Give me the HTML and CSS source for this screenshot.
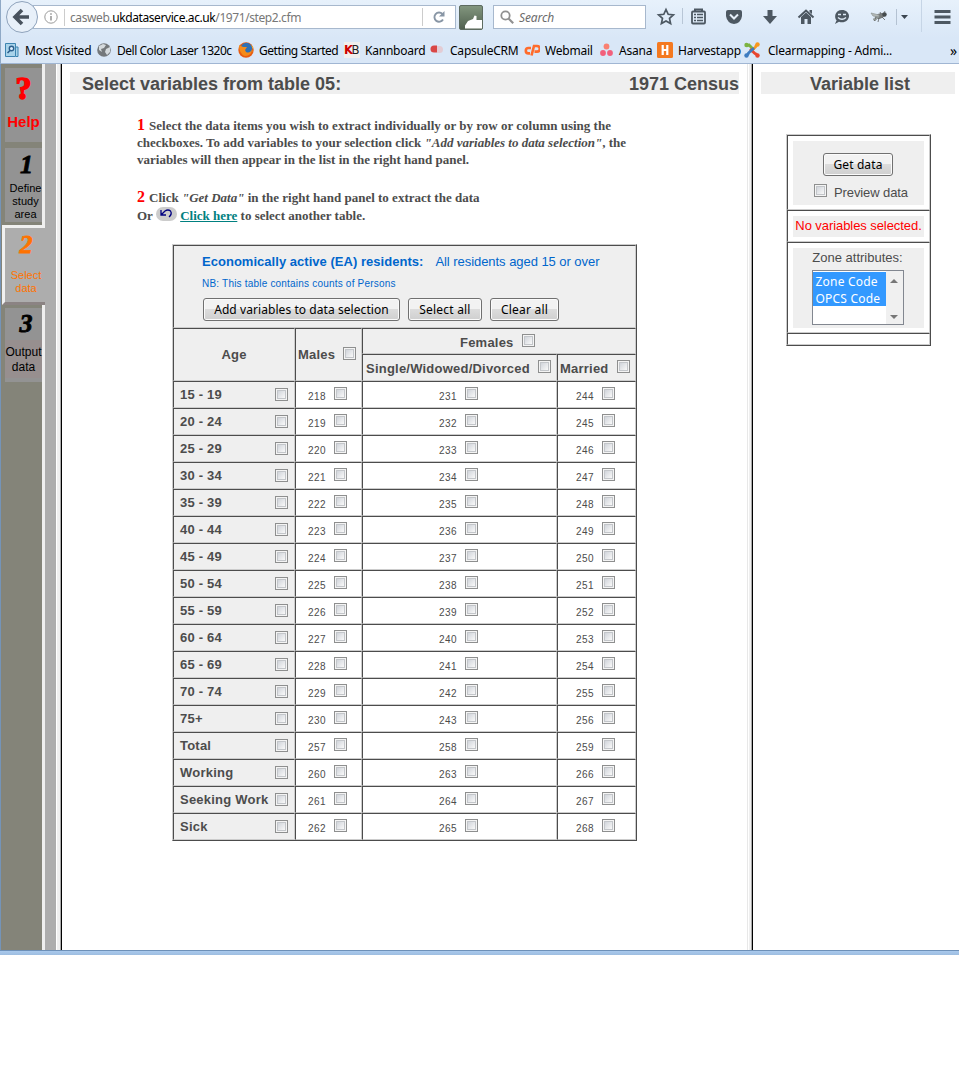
FILE: index.html
```html
<!DOCTYPE html>
<html lang="en">
<head>
<meta charset="utf-8">
<title>Casweb - Select variables</title>
<link rel="stylesheet" href="styles.css">
</head>
<body>
<div class="window">
  <header class="chrome">
    <div class="navbar">
      <svg class="back" width="34" height="34" viewBox="0 0 34 34"><circle cx="17" cy="17" r="15.5" fill="#e8f0f9" stroke="#8fa3bc"/><path d="M17 10l-7 7 7 7M11 17h13" fill="none" stroke="#48525d" stroke-width="3.6"/></svg>
      <div class="url">
        <svg width="14" height="14" viewBox="0 0 14 14"><circle cx="7" cy="7" r="6.2" fill="none" stroke="#9a9a9a"/><path d="M7 6v4.5M7 3.2v1.6" stroke="#8a8a8a" stroke-width="1.4"/></svg>
        <span class="address">casweb.<b>ukdataservice.ac.uk</b>/1971/step2.cfm</span>
        <span class="reload"><svg width="14" height="14" viewBox="0 0 14 14"><path d="M11 9.5A4.6 4.6 0 1 1 10.4 4" fill="none" stroke="#8896a5" stroke-width="1.9"/><path d="M12.5 1v5.5H7z" fill="#8896a5"/></svg></span>
      </div>
      <svg class="addon" width="24" height="25" viewBox="0 0 24 25"><defs><linearGradient id="g" x2="0" y2="1"><stop offset="0" stop-color="#83977f"/><stop offset="1" stop-color="#50604f"/></linearGradient></defs><rect x=".5" y=".5" width="23" height="24" rx="1.5" fill="url(#g)" stroke="#5d6b60"/><path d="M6 23.500v-3l3-4.500 5-2 1.500-3.500 2 .5v4H23v8.500z" fill="#fff"/></svg>
      <div class="search"><svg width="14" height="14" viewBox="0 0 14 14"><circle cx="5.500" cy="5.500" r="4.200" fill="none" stroke="#909090" stroke-width="1.800"/><path d="M8.500 8.500l4.700 4.700" stroke="#909090" stroke-width="2.200"/></svg><i>Search</i></div>
      <div class="tools">
        <svg width="32" height="32" viewBox="0 0 32 32"><path d="M16 9.500l2.200 4.800 5.200.6-3.900 3.500 1.100 5.200-4.600-2.600-4.600 2.600 1.100-5.200-3.900-3.500 5.200-.6z" fill="none" stroke="#4d5862" stroke-width="1.700"/></svg>
        <svg width="32" height="32" viewBox="0 0 32 32"><path d="M.5 8v16" stroke="#b8c6d6"/><rect x="10" y="11.500" width="13" height="12" rx="1" fill="none" stroke="#4d5862" stroke-width="1.800"/><path d="M13 11V9.500h7V11" fill="none" stroke="#4d5862" stroke-width="2"/><path d="M12 14.500h2m1 0h6m-9 3h2m1 0h6m-9 3h2m1 0h6" stroke="#4d5862" stroke-width="1.400"/></svg>
        <svg width="40" height="32" viewBox="0 0 40 32"><path d="M12 12q0-2 2-2h12q2 0 2 2v4q-1 7-8 8-7-1-8-8z" fill="#4d5862"/><path d="M16 14.500l4 4 4-4" fill="none" stroke="#e6effa" stroke-width="2"/></svg>
        <svg width="32" height="32" viewBox="0 0 32 32"><path d="M13.500 10h5v6H23l-7 8-7-8h4.500z" fill="#4d5862"/></svg>
        <svg width="40" height="32" viewBox="0 0 40 32"><path d="M12.500 17.500L20 10.500l7.500 7" fill="none" stroke="#4d5862" stroke-width="2"/><path d="M15 17l5-4.500 5 4.500v7h-3.500v-5h-3v5H15zM23.500 10H26v4l-2.500-2z" fill="#4d5862"/></svg>
        <svg width="32" height="32" viewBox="0 0 32 32"><path d="M16 10c4 0 7 2.700 7 6s-3 6.300-7 6.300c-1 0-2 0-3-.5L9 24l1.600-3.700C8 18 8.500 10 16 10z" fill="#4d5862"/><path d="M12 14.500h3m2 0h3" stroke="#dfeaf6" stroke-width="1.700"/><path d="M12 17.500q4 3.500 8 0" fill="none" stroke="#dfeaf6" stroke-width="1.500"/></svg>
        <svg width="38" height="32" viewBox="0 0 38 32"><ellipse cx="22" cy="16" rx="5.500" ry="2.500" fill="#777b7b" transform="rotate(-18 22 16)"/><circle cx="26.500" cy="14.500" r="2.200" fill="#454b4d"/><path d="M21 15l-8-2 2 3 6 1zM15 19l6-2-4 4z" fill="#b5bab8" stroke="#8d9593" stroke-width=".7"/><path d="M18 18l-2 3m5-3l-1 4m4-5l3 3M23 14l-1-2m4 1l1-2" stroke="#5a5e5f" stroke-width=".8"/></svg>
        <svg width="20" height="32" viewBox="0 0 20 32"><path d="M.5 9v16" stroke="#b4c2d2"/><path d="M5 15h7l-3.500 4z" fill="#3c4650"/></svg>
        <svg width="44" height="32" viewBox="0 0 44 32"><path d="M5.500 0v32" stroke="#c6d5e6"/><path d="M18.500 11.500h16M18.500 17h16M18.500 22.500h16" stroke="#4d5862" stroke-width="2.800"/></svg>
      </div>
    </div>
    <nav class="bookmarks">
      <a><svg width="14" height="16" viewBox="0 0 14 16"><path d="M.5 1.500h10v13H.5zM10.500 5H13v9.500h-2" fill="#a9d3ea" stroke="#3d84b0"/><circle cx="6.500" cy="6.500" r="2.200" fill="#def" stroke="#2c5f8c" stroke-width="1.400"/><path d="M5 8.500L2.500 11" stroke="#2c5f8c" stroke-width="1.600"/></svg><span>Most Visited</span></a>
      <a><svg width="14" height="16" viewBox="0 0 14 16"><circle cx="7" cy="8" r="6.800" fill="#74787b"/><path d="M2 4l4-2 3 1-2 3-3 1 1 3-3-2zM9 7l4-2v5l-3 3-2-3z" fill="#d5dadd"/></svg><span class="tight">Dell Color Laser 1320c</span></a>
      <a><svg width="16" height="16" viewBox="0 0 16 16"><circle cx="8" cy="8" r="7.700" fill="#e75b12"/><circle cx="8.500" cy="6.500" r="5.800" fill="#2f70b5"/><path d="M1 3l4 2 4 0-2 3 1 2q4 2 6-3Q14 14 7 14 1 12 1 3" fill="#f58b19"/><path d="M12 2q4 4 2 9l1-6" fill="#ffc928"/></svg><span class="tight">Getting Started</span></a>
      <a><span class="kb"><b>K</b>B</span><span>Kannboard</span></a>
      <a><svg width="15" height="16" viewBox="0 0 15 16"><path d="M7 3.500H4a3.500 3.500 0 0 0 0 7h3z" fill="#d94746"/><path d="M7 4h2.500a3.500 3.500 0 0 1 0 7H7z" fill="#e3ccd4"/></svg><span>CapsuleCRM</span></a>
      <a><svg width="16" height="16" viewBox="0 0 16 16"><path d="M7 6H4.500a2.700 2.700 0 0 0 0 5.400H6M7.500 13.500L10 4h3a2.700 2.700 0 0 1 0 5.600h-2.500" fill="none" stroke="#ff6c2c" stroke-width="2.600"/></svg><span>Webmail</span></a>
      <a><svg width="14" height="16" viewBox="0 0 14 16"><circle cx="6.500" cy="4.500" r="2.900" fill="#f98072"/><circle cx="3" cy="11" r="2.900" fill="#f2607c"/><circle cx="10" cy="11" r="2.900" fill="#f2607c"/></svg><span>Asana</span></a>
      <a><svg width="16" height="16" viewBox="0 0 16 16"><rect width="16" height="16" rx="1.500" fill="#f47920"/><path d="M5.700 3v10M10.300 3v10M6 8h4" stroke="#fff" stroke-width="2.200"/></svg><span>Harvestapp</span></a>
      <a><svg width="16" height="16" viewBox="0 0 16 16"><g fill="none" stroke-width="2.800"><path d="M3 4l2-1 5 5" stroke="#7cb342"/><path d="M12.500 3l-1 2-5 4.500" stroke="#f8971d"/><path d="M13 12.500l-2-1L6 7" stroke="#e8452f"/><path d="M3.500 13l1-2L10 6" stroke="#3e7cc0"/></g><circle cx="2.500" cy="3" r="2.200" fill="#7cb342"/><circle cx="13.500" cy="2.500" r="2.200" fill="#f8971d"/><circle cx="13.500" cy="13.500" r="2.200" fill="#e8452f"/><circle cx="2.500" cy="13.500" r="2.200" fill="#3e7cc0"/></svg><span>Clearmapping - Admi...</span></a>
      <span class="more">»</span>
    </nav>
  </header>
  <div class="frames">
    <aside class="sidebar">
      <div class="tab help"><em>?</em><strong>Help</strong></div>
      <div class="tab one"><em>1</em><span>Define<br>study<br>area</span></div>
      <div class="current"><em>2</em><span>Select<br>data</span></div>
      <div class="tab three"><em>3</em><span>Output<br>data</span></div>
    </aside>
    <div class="divider"></div>
    <main class="main">
      <h1 class="bar"><span>Select variables from table 05:</span><span>1971 Census</span></h1>
      <div class="steps">
        <p><b class="num">1</b> Select the data items you wish to extract individually or by row or column using the<br>checkboxes. To add variables to your selection click <i>"Add variables to data selection"</i>, the<br>variables will then appear in the list in the right hand panel.</p>
        <p class="second"><b class="num">2</b> Click <i>"Get Data"</i> in the right hand panel to extract the data<br>Or <svg class="undo" width="21" height="14" viewBox="0 0 21 14"><rect width="21" height="14" rx="7" fill="#ccc"/><path d="M5 3v5h5M5.500 7.500L9 4q3-2 5.500 0 2 3-1.500 6" fill="none" stroke="#000080" stroke-width="1.300"/></svg> <a>Click here</a> to select another table.</p>
      </div>
      <div class="grid" id="grid">
        <div class="c h intro">
          <p class="topic"><b>Economically active (EA) residents:</b><span>All residents aged 15 or over</span></p>
          <p class="nb">NB: This table contains counts of Persons</p>
          <div class="buttons"><button class="add">Add variables to data selection</button><button class="all">Select all</button><button class="clear">Clear all</button></div>
        </div>
        <div class="c h age">Age</div>
        <div class="c h males"><span>Males</span><i class="cb"></i></div>
        <div class="c h females"><span>Females</span><i class="cb"></i></div>
        <div class="c h sub swd"><span>Single/Widowed/Divorced</span><i class="cb"></i></div>
        <div class="c h sub married"><span>Married</span><i class="cb"></i></div>
      </div>
    </main>
    <div class="divider second"></div>
    <section class="panel">
      <h2 class="bar">Variable list</h2>
      <div class="box">
        <div class="cell get"><div><button>Get data</button><label><i class="cb"></i>Preview data</label></div></div>
        <div class="cell none"><div>No variables selected.</div></div>
        <div class="cell zone"><div><span>Zone attributes:</span>
          <div class="list"><div class="opts"><span>Zone Code</span><span>OPCS Code</span></div><div class="scroll"><svg width="8" height="5"><path d="M0 5l4-4 4 4z" fill="#777"/></svg><svg width="8" height="5"><path d="M0 0l4 4 4-4z" fill="#777"/></svg></div></div></div></div>
        <div class="cell"></div>
      </div>
    </section>
  </div>
  <footer class="edge"></footer>
</div>
<script src="rows.js"></script>
</body>
</html>
```
FILE: styles.css
```css
* { box-sizing: border-box; }
body { margin: 0; background: #fff; font-family: "Liberation Sans", Arial, sans-serif; color: #4c4c4c; }
p, h1, h2 { margin: 0; }
svg { display: block; flex: none; }
.window { width: 959px; height: 955px; overflow: hidden; }

/* Browser chrome */
.chrome { height: 64px; background: linear-gradient(#e7f1fb, #d9e7f7 60%); border-bottom: 1px solid #a0b6d3; border-left: 1px solid #8fa9c6; font-family: "Noto Sans", "Open Sans", sans-serif; font-size: 12px; color: #000; }
.navbar { display: flex; height: 34px; }
.navbar > * { flex: none; }
.back { margin-left: 4px; position: relative; z-index: 1; }
.url { display: flex; align-items: center; margin: 5px 0 0 -6px; width: 423px; height: 24px; padding-left: 10px; background: #fff; border: 1px solid #a7b8cd; }
.address { margin-left: 6px; padding-left: 5px; border-left: 1px solid #ccc; line-height: 17px; color: #777; letter-spacing: -.41px; white-space: nowrap; }
.address b { font-weight: 400; color: #000; }
.reload { margin-left: auto; width: 33px; height: 18px; padding: 2px 0 0 9px; border-left: 1px solid #ccc; }
.addon { margin: 5px 0 0 3px; }
.search { display: flex; align-items: center; gap: 5px; width: 153px; height: 24px; margin: 5px 0 0 10px; padding-left: 6px; background: #fff; border: 1px solid #a7b8cd; color: #6c6c6c; letter-spacing: -.1px; }
.tools { display: flex; margin-left: 4px; }
.bookmarks { display: grid; grid-template-columns: 92px 141px 106px 86px 94px 76px 57px 87px 206px 8px; margin-left: 4px; height: 29px; padding-top: 3px; align-items: center; }
.bookmarks a { display: flex; align-items: center; gap: 6px; white-space: nowrap; letter-spacing: -.22px; }
.bookmarks a:nth-child(n+3) { gap: 5px; }
.bookmarks a:nth-child(9) { gap: 8px; }
.bookmarks .tight { letter-spacing: -.47px; }
.kb { width: 16px; height: 16px; background: #f1efed; font: 13px/16px "DejaVu Sans Condensed", sans-serif; letter-spacing: -1.5px; color: #222; }
.kb b { color: #c00; }
.more { font-size: 14px; }

/* Frameset */
.frames { display: flex; height: 886px; background: #fff; border-left: 1px solid #7494b8; }
.sidebar { width: 55px; padding-top: 4px; background: linear-gradient(90deg, #848479 41px, #efefef 41px 44px, #adadad 44px); }
.tab { width: 37px; height: 74px; margin: 0 0 6px 4px; background: #939393; text-align: center; color: #000; font-size: 11px; line-height: 13px; white-space: nowrap; }
.sidebar em { display: block; font: italic bold 26px/30px "Liberation Serif", serif; -webkit-text-stroke: .8px currentColor; }
.sidebar span { display: block; }
.sidebar .help { color: #f00; }
.sidebar .help em { font: bold 32px/40px "Liberation Serif", serif; -webkit-text-stroke: 1.5px #f00; }
.help strong { display: block; font: bold 15px/16px "Liberation Sans", sans-serif; padding-top: 6px; }
.one em { padding: 2px 0 0 6px; height: 34px; }
.one span { padding-left: 4px; }
.sidebar .one { margin-bottom: 3px; }
.current { width: 43px; height: 80px; margin: 0 0 3px 1px; padding: 2px 0 0 5px; background: #adadad; border: solid #f0f0f0; border-width: 3px 0 3px 3px; border-bottom-color: #8b8383; color: #ff7300; text-align: center; font-size: 11px; line-height: 13px; }
.current em, .current span { width: 32px; }
.current em { height: 39px; }
.three { padding-top: 1px; background: linear-gradient(#939393 32px, #978f8f 32px 70px, #939393 70px); }
.three span { font-size: 12px; line-height: 15px; padding-top: 6px; }
.three em { padding-left: 5px; }
.divider { width: 6px; background: linear-gradient(90deg, #fff 1px, #efefef 1px 4px, #aaa 4px 5px, #000 5px); }
.divider.second { margin: 0; background: linear-gradient(90deg, #e8e8e8 1px, #fff 1px 2px, #efefef 2px 4px, #aaa 4px 5px, #000 5px); }
.main { width: 685px; padding: 8px 8px 0; }
.panel { flex: 1; padding: 8px 4px 0 8px; }
.bar { display: flex; justify-content: space-between; height: 22px; background: #efefef; font-size: 18px; line-height: 24px; font-weight: 700; padding-left: 12px; }
.panel .bar { justify-content: center; padding-left: 4px; }
.steps { padding: 23px 0 0 67px; font: bold 13px/17px "Liberation Serif", serif; white-space: nowrap; }
.num { color: #f00; font-size: 16px; line-height: 16px; margin-right: .8px; }
.second { margin-top: 21px; }
.steps .second { line-height: 18px; }
.undo { display: inline-block; vertical-align: 0; margin-bottom: -1px; }
.steps a { color: #008080; text-decoration: underline; }

/* Variable table */
.grid { display: grid; grid-template-columns: 122px 67px 195px 79px; grid-template-rows: 83px 26px 27px; grid-auto-rows: 27px; width: 465px; margin: 19px 0 0 102px; border: 1px solid #4c4c4c; border-top-color: #ccc; border-left-color: #ccc; font-size: 13px; }
.c { display: flex; align-items: center; border: 1px solid #ccc; border-top-color: #4c4c4c; border-left-color: #4c4c4c; white-space: nowrap; }
.h { background: #efefef; font-weight: 700; letter-spacing: .22px; }
.cb { display: block; flex: none; width: 13px; height: 13px; border: 1px solid #8e8f8f; background: linear-gradient(135deg, #c5cad2, #f8f8f8 80%) padding-box; box-shadow: inset 0 0 0 1px #f4f4f4, inset 0 0 0 2px #c3c6ca; }
.intro { grid-column: 1 / 5; display: block; padding: 7px 0 0 28px; font-weight: 400; color: #0066cc; letter-spacing: 0; }
.topic { font-size: 13px; line-height: 17px; letter-spacing: -.05px; }
.topic b { letter-spacing: .03px; margin-right: 12px; }
.nb { font-size: 10px; line-height: 13px; margin-top: 7px; letter-spacing: .2px; }
.buttons { display: flex; gap: 8px; margin: 8px 0 0 1px; }
button { width: 70px; height: 23px; padding: 0; border: 1px solid #707070; border-radius: 3px; box-shadow: inset 0 0 0 1px #fbfbfb; background: linear-gradient(#f2f2f2 50%, #dcdcdc 50%, #cfcfcf); color: #000; font: 12px/22px "Noto Sans", "Open Sans", sans-serif; white-space: nowrap; }
.add { width: 197px; letter-spacing: .07px; }
.all { width: 74px; letter-spacing: .2px; }
.clear { width: 69px; letter-spacing: .2px; }
.age { grid-row: 2 / 4; justify-content: center; }
.males { grid-row: 2 / 4; gap: 8px; padding-left: 2px; }
.males .cb { margin-top: -3px; }
.females { grid-column: 3 / 5; gap: 8px; padding-left: 97px; }
.females span, .sub span { padding-top: 2px; }
.females .cb { margin-top: -2px; }
.sub { gap: 8px; padding-left: 3px; }
.sub .cb { margin-top: -2px; }
.married { padding-left: 2px; }
.label { justify-content: space-between; padding: 0 6px; }
.n { gap: 8px; padding-left: 12px; font-size: 10px; letter-spacing: .4px; }
.n span { width: 18px; padding-top: 4px; }
.n .cb { margin-top: -2px; }
.col3 { padding-left: 76px; }
.col4 { padding-left: 18px; }

/* Selection panel */
.box { display: grid; grid-template-rows: 75px 32px 91px 12px; width: 145px; margin: 40px 0 0 25px; border: 1px solid #4c4c4c; border-top-color: #ccc; border-left-color: #ccc; font-size: 13px; white-space: nowrap; }
.cell { padding: 5px 4px 4px 5px; border: 1px solid #ccc; border-top-color: #4c4c4c; border-left-color: #4c4c4c; }
.cell > div { width: 131px; height: 100%; background: #efefef; display: flex; flex-direction: column; align-items: center; }
.get > div { padding: 12px 1px 0 0; }
.get button { letter-spacing: .1px; }
.get label { display: flex; gap: 7px; margin: 8px 0 0; line-height: 18px; letter-spacing: -.1px; width: 100%; padding-left: 21px; }
.none > div { color: #f00; line-height: 19px; letter-spacing: -.07px; }
.zone > div > span { line-height: 20px; margin-right: 2px; }
.list { display: flex; width: 92px; height: 55px; margin: 2px 2px 0 0; border: 1px solid #828790; background: #fff; }
.opts { width: 73px; padding-top: 1px; font: 12px/19px "Noto Sans", sans-serif; letter-spacing: .2px; color: #fff; }
.opts span { display: block; padding-left: 3px; height: 17px; background: #39f; }
.scroll { flex: 1; display: flex; flex-direction: column; align-items: center; justify-content: space-between; padding: 7px 0 4px; background: #f0f0f0; }
.edge { height: 5px; background: linear-gradient(#6d90b8 1px, #a9c9ed 1px, #9dbde0); }
```
FILE: rows.js
```js
// Each row: label followed by the variable numbers for the three groups.
const rows = [];
for (let i = 0; i < 12; i++) rows.push([`${15 + i * 5} - ${19 + i * 5}`, 218 + i, 231 + i, 244 + i]);
rows.push(['75+', 230, 243, 256], ['Total', 257, 258, 259], ['Working', 260, 263, 266], ['Seeking Work', 261, 264, 267], ['Sick', 262, 265, 268]);
document.getElementById('grid').insertAdjacentHTML('beforeend', rows.map(([label, ...nums]) =>
  `<div class="c h label"><span>${label}</span><i class="cb"></i></div>` +
  nums.map((n, i) => `<div class="c n col${i + 2}"><span>${n}</span><i class="cb"></i></div>`).join('')
).join(''));
```
